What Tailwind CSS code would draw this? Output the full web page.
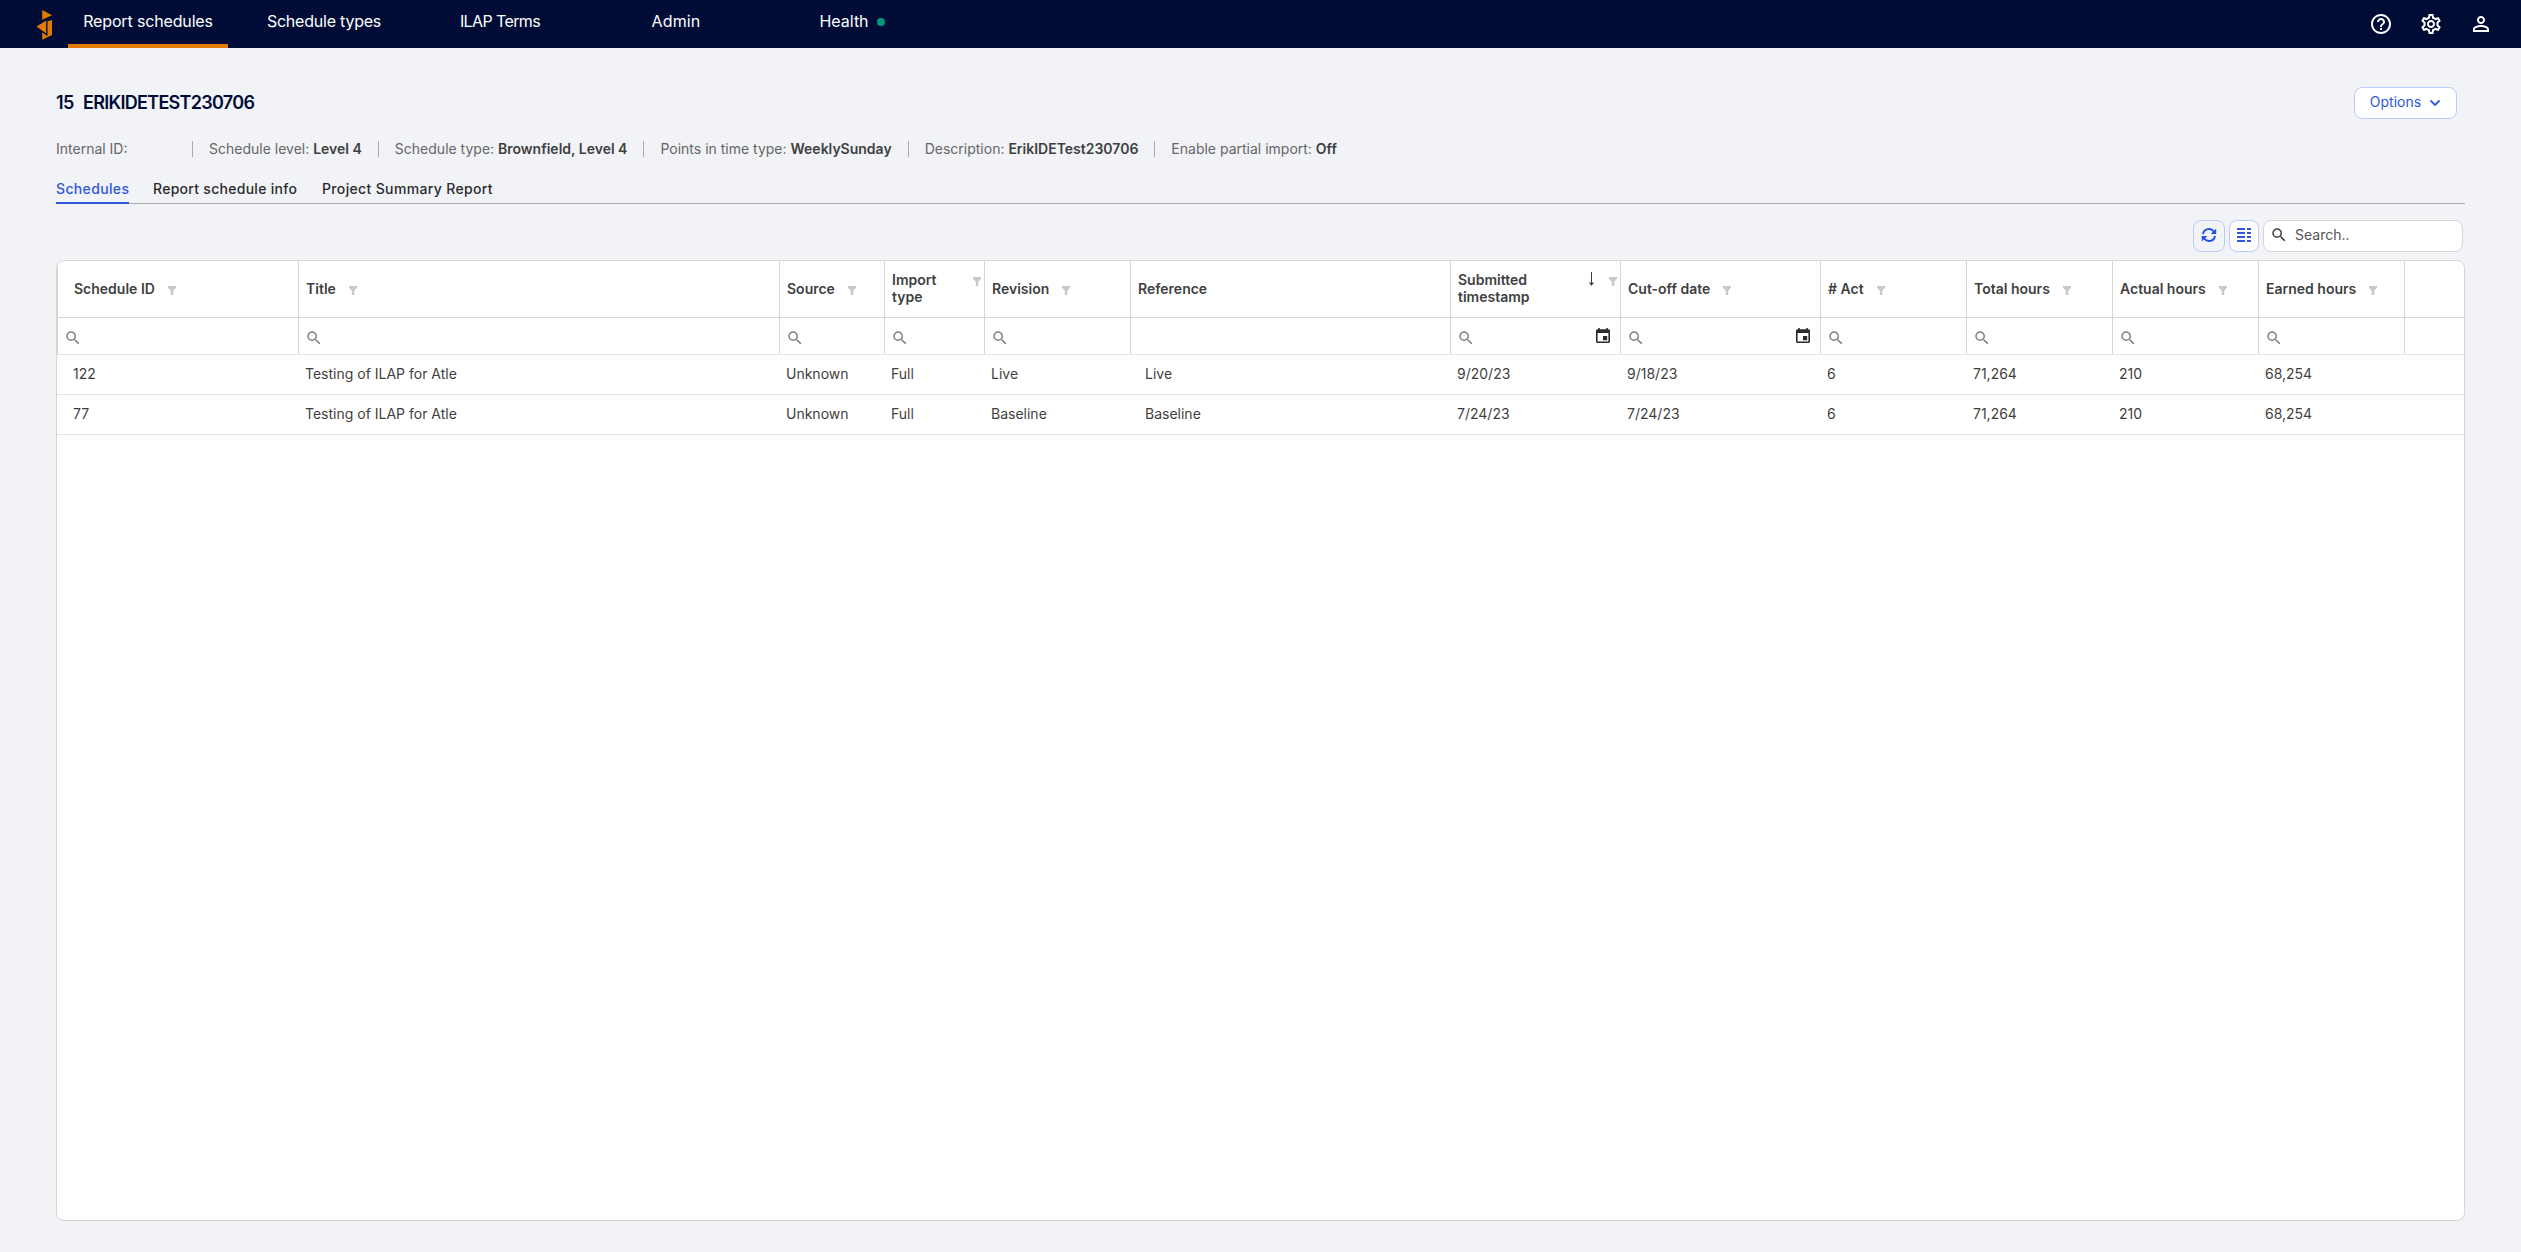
<!DOCTYPE html>
<html lang="en">
<head>
  <meta charset="UTF-8" />
  <meta name="viewport" content="width=device-width, initial-scale=1.0"/>
  <title>Report schedules</title>
  <script src="https://cdn.jsdelivr.net/npm/@tailwindcss/browser@4"></script>
</head>
<body class="bg-[#f1f3f7] font-['Inter',sans-serif] text-sm text-[#3f3f3f] h-screen flex flex-col overflow-hidden">

  <!-- Shared icons -->
  <svg class="hidden">
    <symbol id="search" viewBox="0 0 24 24"><path fill="currentColor" d="M15.5 14h-.79l-.28-.27A6.471 6.471 0 0 0 16 9.5 6.5 6.5 0 1 0 9.5 16c1.61 0 3.09-.59 4.23-1.57l.27.28v.79l5 4.99L20.49 19l-4.99-5zm-6 0C7.01 14 5 11.99 5 9.5S7.01 5 9.5 5 14 7.01 14 9.5 11.99 14 9.5 14z"/></symbol>
    <symbol id="filter" viewBox="0 0 8 9"><path fill="currentColor" d="M0 0h8v1.8L5.3 4.8V9H2.8V4.8L0 1.8z"/></symbol>
    <symbol id="calendar" viewBox="0 0 14 15"><path fill="currentColor" fill-rule="evenodd" d="M2.2 0h1.6v1.3h6.4V0h1.6v1.3h.7A1.5 1.5 0 0 1 14 2.8V13.5A1.5 1.5 0 0 1 12.5 15H1.5A1.5 1.5 0 0 1 0 13.5V2.8A1.5 1.5 0 0 1 1.5 1.3h.7zM1.6 5v8.4h10.8V5zM7 8h4.2v4.200H7z"/></symbol>
  </svg>

  <!-- Top bar -->
  <header class="bg-[#000c36] h-12 shrink-0 flex items-center text-white">
    <svg class="ml-9 mr-4 w-4 h-[31px]" viewBox="0 0 16 31"><g fill="#e07a00"><path d="M6.200 1L16 6.300 6.200 10.800z"/><path d="M.5 17.500L10.200 11.500v13z"/><path d="M11.500 12.200L16 11v15L6.200 30.800V23.500L11.500 27z"/></g></svg>
    <nav class="flex h-12 text-base">
      <a class="w-40 h-12 border-b-4 border-[#e07a00] text-center leading-[42px] tracking-[-0.15px]">Report schedules</a>
      <a class="w-44 ml-2 text-center leading-[42px] tracking-[-0.22px]">Schedule types</a>
      <a class="w-44 text-center leading-[42px] tracking-[-0.6px]">ILAP Terms</a>
      <a class="w-44 text-center leading-[42px] tracking-[0.16px]">Admin</a>
      <a class="w-44 flex items-center justify-center gap-2 leading-[42px] pb-1.5">Health <span class="size-2 rounded-full bg-[#00977b] mt-0.5"></span></a>
    </nav>
    <div class="ml-auto mr-7 flex gap-[26px]">
      <svg class="size-6" viewBox="0 0 24 24" fill="currentColor"><path d="M11 18h2v-2h-2v2zm1-16C6.480 2 2 6.480 2 12s4.480 10 10 10 10-4.480 10-10S17.520 2 12 2zm0 18c-4.410 0-8-3.590-8-8s3.590-8 8-8 8 3.590 8 8-3.590 8-8 8zm0-14c-2.210 0-4 1.790-4 4h2c0-1.100.9-2 2-2s2 .9 2 2c0 2-3 1.750-3 5h2c0-2.250 3-2.500 3-5 0-2.210-1.790-4-4-4z"/></svg>
      <svg class="size-6" viewBox="0 0 24 24" fill="currentColor"><path d="M19.430 12.980c.04-.32.070-.64.070-.98 0-.34-.03-.66-.07-.98l2.110-1.650c.19-.15.24-.42.12-.64l-2-3.460c-.09-.16-.26-.25-.44-.25-.06 0-.12.010-.17.030l-2.490 1c-.52-.4-1.080-.73-1.690-.98l-.38-2.650C14.460 2.180 14.250 2 14 2h-4c-.25 0-.46.180-.49.420l-.38 2.650c-.61.250-1.170.590-1.690.980l-2.490-1c-.06-.02-.12-.03-.18-.03-.17 0-.34.090-.43.250l-2 3.460c-.13.220-.07.490.12.640l2.110 1.650c-.04.320-.07.650-.07.980s.03.660.07.980l-2.110 1.650c-.19.150-.24.420-.12.640l2 3.460c.09.160.26.250.44.250.06 0 .12-.01.17-.03l2.490-1c.52.400 1.080.730 1.690.980l.38 2.650c.03.240.24.420.49.420h4c.25 0 .46-.18.49-.42l.38-2.650c.61-.25 1.170-.59 1.690-.98l2.490 1c.06.020.12.030.18.030.17 0 .34-.09.430-.25l2-3.460c.12-.22.070-.49-.12-.64l-2.110-1.650zm-1.980-1.710c.04.310.05.520.05.730s-.02.430-.05.730l-.14 1.130.89.700 1.080.840-.7 1.210-1.270-.51-1.040-.42-.9.680c-.43.320-.84.560-1.250.730l-1.060.43-.16 1.130-.2 1.350h-1.400l-.19-1.350-.16-1.130-1.060-.43c-.43-.18-.83-.41-1.230-.71l-.91-.7-1.060.43-1.270.51-.7-1.210 1.080-.84.89-.7-.14-1.130c-.03-.31-.05-.54-.05-.74s.02-.43.050-.73l.14-1.130-.89-.7-1.080-.84.7-1.210 1.270.51 1.040.42.900-.68c.43-.32.840-.56 1.250-.73l1.060-.43.16-1.130.2-1.350h1.390l.19 1.350.16 1.130 1.060.43c.43.180.83.410 1.230.71l.91.700 1.060-.43 1.270-.51.700 1.210-1.070.85-.89.700.14 1.130zM12 8c-2.210 0-4 1.790-4 4s1.790 4 4 4 4-1.790 4-4-1.790-4-4-4zm0 6c-1.100 0-2-.9-2-2s.9-2 2-2 2 .9 2 2-.9 2-2 2z"/></svg>
      <svg class="size-6" viewBox="0 0 24 24" fill="currentColor"><path d="M12 5.900a2.100 2.100 0 1 1 0 4.200 2.100 2.100 0 0 1 0-4.200m0 9c2.970 0 6.100 1.460 6.100 2.100v1.100H5.900V17c0-.64 3.130-2.100 6.100-2.100M12 4C9.790 4 8 5.790 8 8s1.790 4 4 4 4-1.790 4-4-1.790-4-4-4zm0 9c-2.670 0-8 1.340-8 4v3h16v-3c0-2.660-5.330-4-8-4z"/></svg>
    </div>
  </header>

  <main class="flex-1 flex flex-col px-14 pb-[31px] min-h-0">
    <!-- Title -->
    <div class="mt-[39px] pr-2 h-8 flex justify-between items-center text-[#000c36]">
      <h1 class="text-lg font-semibold flex gap-[9px]"><span class="tracking-[-0.5px]">15</span><span class="tracking-[-0.7px]">ERIKIDETEST230706</span></h1>
      <button class="w-[103px] h-8 rounded-lg border border-[#bccafb] bg-white text-[#2f58dc] flex items-center justify-center gap-2 pb-0.5">Options
        <svg class="w-3 h-3 mt-0.5" viewBox="0 0 12 12" fill="none" stroke="currentColor" stroke-width="1.800"><path d="M1.500 3.500L6 8 10.500 3.500"/></svg>
      </button>
    </div>

    <!-- Details -->
    <div class="mt-[22px] h-4 flex items-center text-[#666] leading-4">
      <span class="w-[137px] border-r border-[#a9abb0]">Internal ID:</span>
      <span class="px-4 border-r border-[#a9abb0]">Schedule level: <b class="font-semibold text-[#3f3f3f]">Level 4</b></span>
      <span class="px-4 border-r border-[#a9abb0]">Schedule type: <b class="font-semibold text-[#3f3f3f]">Brownfield, Level 4</b></span>
      <span class="px-4 border-r border-[#a9abb0]">Points in time type: <b class="font-semibold text-[#3f3f3f]">WeeklySunday</b></span>
      <span class="px-4 border-r border-[#a9abb0]">Description: <b class="font-semibold text-[#3f3f3f]">ErikIDETest230706</b></span>
      <span class="px-4">Enable partial import: <b class="font-semibold text-[#3f3f3f]">Off</b></span>
    </div>

    <!-- Tabs -->
    <div class="mt-[22px] h-[25px] flex gap-6 border-b border-[#a9abb0] font-medium leading-5 tracking-[0.35px] text-[#2b2b2b]">
      <a class="w-[73px] h-[25px] border-b-2 border-[#2f58dc] text-[#2f58dc]">Schedules</a>
      <a class="w-[145px] tracking-[0.28px]">Report schedule info</a>
      <a>Project Summary Report</a>
    </div>

    <!-- Toolbar -->
    <div class="mt-4 h-8 pr-0.5 flex justify-end gap-1 shrink-0">
      <button class="size-8 rounded-lg border border-[#bccafb] text-[#2450e8] flex items-center justify-center pb-0.5">
        <svg class="size-4" viewBox="0 0 16 16" fill="none" stroke="currentColor" stroke-width="2"><path d="M2 7a6 6 0 0 1 10.800-2.500M14 9a6 6 0 0 1-10.800 2.500"/><path fill="currentColor" stroke="none" d="M15.200 1.500V7H9.700zM.8 14.500V9h5.500z"/></svg>
      </button>
      <button class="w-[30px] h-8 rounded-lg border border-[#bccafb] bg-white text-[#2f58dc] flex items-center justify-center pb-0.5">
        <svg class="size-3.5" viewBox="0 0 14 14" fill="currentColor"><path d="M0 0h8v2H0zM10 0h4v2h-4zM0 4h8v2H0zM10 4h4v2h-4zM0 8h8v2H0zM10 8h4v2h-4zM0 12h8v2H0zM10 12h4v2h-4z"/></svg>
      </button>
      <div class="w-[200px] h-8 rounded-lg border border-[#d6d6d6] bg-white flex items-center pl-1.5 pb-0.5">
        <svg class="size-[18px]"><use href="#search"/></svg>
        <span class="ml-[7px] text-[#555]">Search..</span>
      </div>
    </div>

    <!-- Grid -->
    <div class="mt-2 flex-1 min-h-0 rounded-lg border border-[#d6d6d6] bg-white overflow-hidden">
      <div id="head" class="flex h-[57px] border-b border-[#d6d6d6] font-semibold leading-[17px]"></div>
      <div id="filters" class="flex h-[37px] border-b border-[#e4e4e4]"></div>
      <div id="rows"></div>
    </div>
  </main>

  <script>
    const cols = [
      { title: 'Schedule ID', w: 242, filter: true, first: true },
      { title: 'Title', w: 481, filter: true },
      { title: 'Source', w: 105, filter: true },
      { title: 'Import<br>type', w: 100, filter: true, wrap: true },
      { title: 'Revision', w: 146, filter: true },
      { title: 'Reference', w: 320, ref: true },
      { title: 'Submitted<br>timestamp', w: 170, filter: true, wrap: true, sort: true, date: true },
      { title: 'Cut-off date', w: 200, filter: true, date: true },
      { title: '# Act', w: 146, filter: true },
      { title: 'Total hours', w: 146, filter: true },
      { title: 'Actual hours', w: 146, filter: true },
      { title: 'Earned hours', w: 146, filter: true }
    ];
    const data = [
      ['122', 'Testing of ILAP for Atle', 'Unknown', 'Full', 'Live', 'Live', '9/20/23', '9/18/23', '6', '71,264', '210', '68,254'],
      ['77', 'Testing of ILAP for Atle', 'Unknown', 'Full', 'Baseline', 'Baseline', '7/24/23', '7/24/23', '6', '71,264', '210', '68,254']
    ];

    const filterIcon = '<svg class="w-2 h-[9px] shrink-0 text-[#c8c8c8]"><use href="#filter"/></svg>';
    const sortIcon = '<svg class="w-[5px] h-3.5 mr-[15px]" viewBox="0 0 5 14"><path fill="currentColor" d="M2 0h1v10.500h2L2.500 14 0 10.500h2z"/></svg>';

    document.getElementById('head').innerHTML = cols.map(c => `
      <div class="flex shrink-0 border-r border-[#d6d6d6] ${c.wrap ? 'items-start pt-2.5 pr-[3px]' : 'items-center pb-px'} ${c.first ? 'border-l pl-4' : 'pl-[7px]'}" style="width:${c.w}px">
        <span>${c.title}</span>
        ${c.wrap ? `<span class="ml-auto flex ${c.sort ? 'mt-px' : 'mt-1.5'}">${c.sort ? sortIcon : ''}<span class="${c.sort ? 'mt-[5px]' : ''} flex">${filterIcon}</span></span>`
          : c.filter ? `<span class="ml-[13px] mt-[3px]">${filterIcon}</span>` : ''}
      </div>`).join('');

    document.getElementById('filters').innerHTML = cols.map(c => `
      <div class="flex shrink-0 items-center border-r border-[#d6d6d6] pl-1.5 pr-[10px] ${c.first ? 'border-l' : ''}" style="width:${c.w}px">
        ${c.ref ? '' : '<svg class="size-[18px] mt-[3px] text-[#808080]"><use href="#search"/></svg>'}
        ${c.date ? '<svg class="w-3.5 h-[15px] ml-auto -mt-px text-[#2b2b2b]"><use href="#calendar"/></svg>' : ''}
      </div>`).join('');

    document.getElementById('rows').innerHTML = data.map(r => `
      <div class="flex h-10 items-center border-b border-[#e4e4e4] pb-0.5">${r.map((v, i) =>
        `<span class="shrink-0 ${cols[i].first ? 'pl-4' : cols[i].ref ? 'pl-3.5' : 'pl-1.5'}" style="width:${cols[i].w}px">${v}</span>`).join('')}</div>`).join('');
  </script>
</body>
</html>
